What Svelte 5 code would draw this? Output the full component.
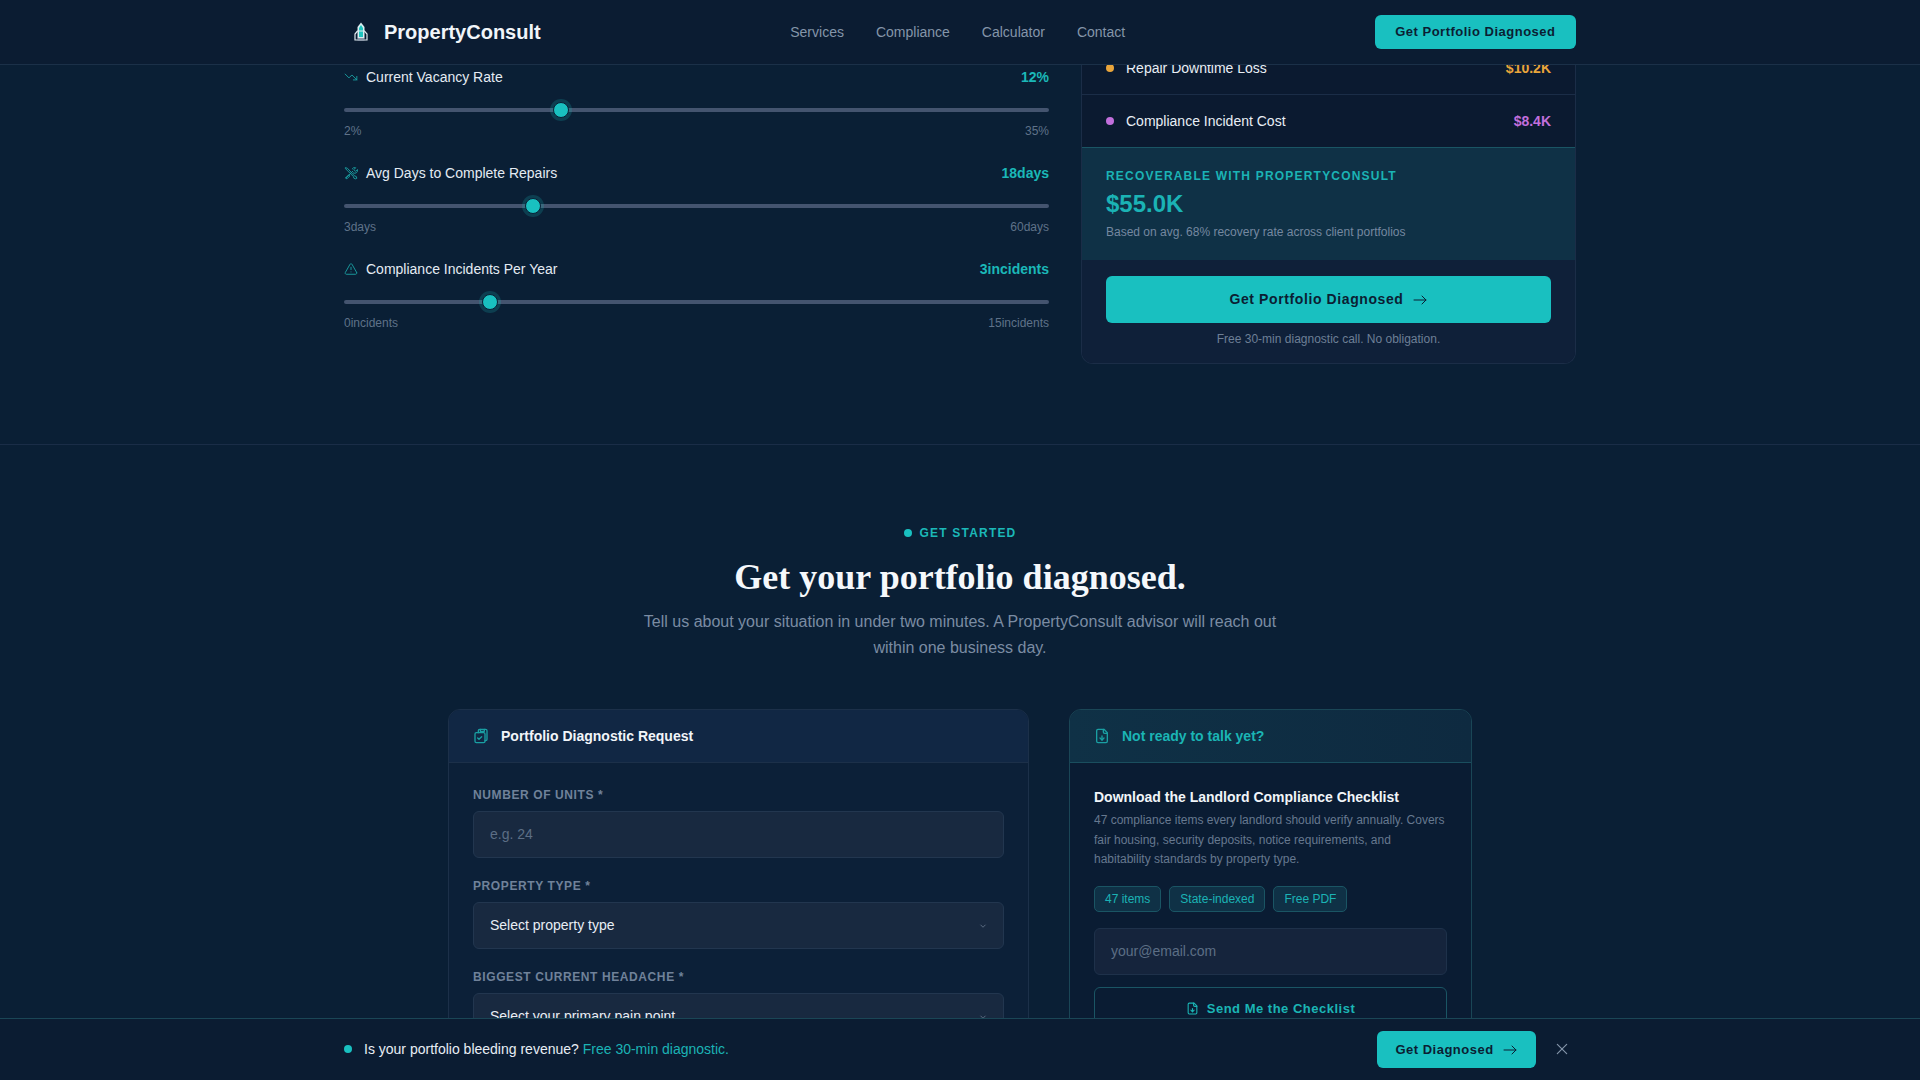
<script>
  const sliders = [
    { label: 'Current Vacancy Rate', icon: 'trend', value: 12, min: 2, max: 35, unit: '%' },
    { label: 'Avg Days to Complete Repairs', icon: 'tools', value: 18, min: 3, max: 60, unit: 'days' },
    { label: 'Compliance Incidents Per Year', icon: 'alert', value: 3, min: 0, max: 15, unit: 'incidents' }
  ];
  const costs = [
    { label: 'Repair Downtime Loss', amount: '$10.2K', color: '#e9a53b' },
    { label: 'Compliance Incident Cost', amount: '$8.4K', color: '#c26fdc' }
  ];
  const tags = ['47 items', 'State-indexed', 'Free PDF'];
</script>

<header class="topbar">
  <div class="topbar-inner">
    <a class="brand" href="#top">
      <svg class="brand-mark" viewBox="0 0 16 20" width="16" height="20" aria-hidden="true">
        <path d="M8 0.5 L11.5 5 V16 H4.5 V5 Z" fill="#dbeef2" />
        <path d="M8 3 L10 6 V15 H6 V6 Z" fill="#1fc4bf" />
        <path d="M4.5 9 L2 12 V18 H5.5 V16 H10.5 V18 H14 V12 L11.5 9 Z" fill="none" stroke="#dfe9ee" stroke-width="1.2" />
        <rect x="4.5" y="16" width="7" height="3" fill="#8a97a8" />
      </svg>
      <span>PropertyConsult</span>
    </a>
    <nav class="nav">
      <a href="#services">Services</a>
      <a href="#compliance">Compliance</a>
      <a href="#calculator">Calculator</a>
      <a href="#contact">Contact</a>
    </nav>
    <button class="btn btn-head">Get Portfolio Diagnosed</button>
  </div>
</header>

<main>
  <section class="calc">
    <div class="calc-grid">
      <div class="sliders">
        {#each sliders as s}
          <div class="slider-row">
            <div class="slider-head">
              <span class="slider-label">
                <svg class="ico" viewBox="0 0 24 24" width="14" height="14" aria-hidden="true">
                  {#if s.icon === 'trend'}
                    <path d="M22 17 13.5 8.5 8.5 13.5 2 7" /><path d="M16 17h6v-6" />
                  {:else if s.icon === 'tools'}
                    <path d="M4 20 15 9" /><path d="M14 5a5 5 0 0 1 6-2l-3 3 1 2 2 1 3-3a5 5 0 0 1-7 6" />
                    <path d="M3 3l3 1 12 13 3 1 1 3-2 1-3-1-1-3L5 7 3 5z" />
                    <path d="M3 21l2 1 5-5-2-2-5 5z" />
                  {:else}
                    <path d="m21.73 18-8-14a2 2 0 0 0-3.46 0l-8 14A2 2 0 0 0 4 21h16a2 2 0 0 0 1.73-3" />
                    <path d="M12 9v4" /><path d="M12 17h.01" />
                  {/if}
                </svg>
                {s.label}
              </span>
              <span class="slider-value">{s.value}{s.unit}</span>
            </div>
            <input class="range" type="range" min={s.min} max={s.max} value={s.value} aria-label={s.label} />
            <div class="slider-limits">
              <span>{s.min}{s.unit}</span>
              <span>{s.max}{s.unit}</span>
            </div>
          </div>
        {/each}
      </div>

      <aside class="cost-card">
        {#each costs as c}
          <div class="cost-row">
            <span class="cost-name">
              <i class="dot" style="background:{c.color}"></i>
              {c.label}
            </span>
            <strong style="color:{c.color}">{c.amount}</strong>
          </div>
        {/each}
        <div class="recover">
          <div class="recover-label">RECOVERABLE WITH PROPERTYCONSULT</div>
          <div class="recover-amount">$55.0K</div>
          <div class="recover-note">Based on avg. 68% recovery rate across client portfolios</div>
        </div>
        <div class="cost-cta">
          <button class="btn btn-wide">
            Get Portfolio Diagnosed
            <svg class="ico arrow" viewBox="0 0 24 24" width="16" height="16" aria-hidden="true"><path d="M3 12h18" /><path d="m15 6 6 6-6 6" /></svg>
          </button>
          <p>Free 30-min diagnostic call. No obligation.</p>
        </div>
      </aside>
    </div>
  </section>

  <section class="started">
    <div class="eyebrow"><i></i>GET STARTED</div>
    <h2>Get your portfolio diagnosed.</h2>
    <p class="lede">Tell us about your situation in under two minutes. A PropertyConsult advisor will reach out within one business day.</p>

    <div class="form-grid">
      <div class="panel">
        <div class="panel-head">
          <svg class="ico" viewBox="0 0 24 24" width="16" height="16" aria-hidden="true">
            <rect x="3" y="7" width="15" height="15" rx="2" />
            <path d="M8 7V4a2 2 0 0 1 2-2h9a2 2 0 0 1 2 2v13a2 2 0 0 1-2 2h-1" />
            <path d="M11 2v3h6V2" /><path d="m7 15 2 2 4-4" />
          </svg>
          <h3>Portfolio Diagnostic Request</h3>
        </div>
        <form class="panel-body">
          <label class="field">
            <span>NUMBER OF UNITS *</span>
            <input type="text" placeholder="e.g. 24" />
          </label>
          <label class="field">
            <span>PROPERTY TYPE *</span>
            <div class="select-wrap">
              <select><option>Select property type</option></select>
              <svg class="chev" viewBox="0 0 24 24" width="10" height="10" aria-hidden="true"><path d="m6 9 6 6 6-6" /></svg>
            </div>
          </label>
          <label class="field">
            <span>BIGGEST CURRENT HEADACHE *</span>
            <div class="select-wrap">
              <select><option>Select your primary pain point</option></select>
              <svg class="chev" viewBox="0 0 24 24" width="10" height="10" aria-hidden="true"><path d="m6 9 6 6 6-6" /></svg>
            </div>
          </label>
        </form>
      </div>

      <div class="panel panel-alt">
        <div class="panel-head">
          <svg class="ico" viewBox="0 0 24 24" width="16" height="16" aria-hidden="true">
            <path d="M15 2H6a2 2 0 0 0-2 2v16a2 2 0 0 0 2 2h12a2 2 0 0 0 2-2V7Z" /><path d="M14 2v4a2 2 0 0 0 2 2h4" /><path d="M12 18v-6" /><path d="m9 15 3 3 3-3" />
          </svg>
          <h3>Not ready to talk yet?</h3>
        </div>
        <div class="panel-body">
          <h4>Download the Landlord Compliance Checklist</h4>
          <p class="desc">47 compliance items every landlord should verify annually. Covers fair housing, security deposits, notice requirements, and habitability standards by property type.</p>
          <div class="tags">
            {#each tags as t}<span>{t}</span>{/each}
          </div>
          <input class="email" type="text" placeholder="your@email.com" />
          <button class="btn-outline" type="button">
            <svg class="ico" viewBox="0 0 24 24" width="13" height="13" aria-hidden="true">
              <path d="M15 2H6a2 2 0 0 0-2 2v16a2 2 0 0 0 2 2h12a2 2 0 0 0 2-2V7Z" /><path d="M14 2v4a2 2 0 0 0 2 2h4" /><path d="M12 18v-6" /><path d="m9 15 3 3 3-3" />
            </svg>
            Send Me the Checklist
          </button>
        </div>
      </div>
    </div>
  </section>
</main>

<div class="stickybar">
  <div class="stickybar-inner">
    <div class="sticky-text"><i></i>Is your portfolio bleeding revenue?&nbsp;<a href="#form">Free 30-min diagnostic.</a></div>
    <div class="sticky-actions">
      <button class="btn btn-sticky">
        Get Diagnosed
        <svg class="ico arrow" viewBox="0 0 24 24" width="16" height="16" aria-hidden="true"><path d="M3 12h18" /><path d="m15 6 6 6-6 6" /></svg>
      </button>
      <button class="close" aria-label="Close">
        <svg class="ico" viewBox="0 0 24 24" width="14" height="14" aria-hidden="true"><path d="M20 4 4 20" /><path d="m4 4 16 16" /></svg>
      </button>
    </div>
  </div>
</div>

<style>
  :global(body) {
    background: #0a1f35;
    color: #e8eef5;
    font-family: "Liberation Sans", Arial, sans-serif;
    overflow: hidden;
  }
  a {
    color: inherit;
    text-decoration: none;
  }
  h2, h3, h4, p {
    margin: 0;
  }
  .ico {
    fill: none;
    stroke: currentColor;
    stroke-width: 2;
    stroke-linecap: round;
    stroke-linejoin: round;
    flex: none;
  }
  .arrow {
    stroke-width: 1.5;
  }

  .topbar {
    position: fixed;
    top: 0;
    left: 0;
    right: 0;
    z-index: 10;
    height: 65px;
    box-sizing: border-box;
    background: #0b1c32;
    border-bottom: 1px solid #1b3048;
  }
  .topbar-inner {
    max-width: 1232px;
    height: 64px;
    margin: 0 auto;
    display: flex;
    align-items: center;
    justify-content: space-between;
  }
  .brand {
    display: flex;
    align-items: center;
    gap: 15px;
    padding-left: 9px;
    font-size: 20px;
    font-weight: 700;
    color: #f1f5f9;
  }
  .nav {
    display: flex;
    gap: 32px;
    font-size: 14px;
    color: #8495a9;
  }
  .btn {
    border: 0;
    border-radius: 6px;
    background: #19c0c0;
    color: #0b1e33;
    font-family: inherit;
    font-weight: 700;
    display: inline-flex;
    align-items: center;
    justify-content: center;
  }
  .btn-head {
    height: 34px;
    padding: 0 20.5px 1px;
    font-size: 13px;
    letter-spacing: 0.5px;
  }

  .calc {
    padding: 42px 0 80px;
    border-bottom: 1px solid #1a2d47;
  }
  .calc-grid {
    max-width: 1232px;
    margin: 0 auto;
    display: grid;
    grid-template-columns: 705px 495px;
    gap: 32px;
    align-items: start;
  }
  .sliders {
    padding-top: 25px;
    display: flex;
    flex-direction: column;
    gap: 24px;
  }
  .slider-head {
    display: flex;
    justify-content: space-between;
    align-items: center;
    height: 20px;
    font-size: 14px;
  }
  .slider-label {
    display: flex;
    align-items: center;
    gap: 8px;
    color: #e4ebf3;
  }
  .slider-label .ico {
    color: #1a9fa3;
    stroke-width: 1.6;
  }
  .slider-value {
    color: #1bb8b8;
    font-weight: 700;
  }
  .range {
    appearance: none;
    -webkit-appearance: none;
    display: block;
    width: 100%;
    height: 14px;
    margin: 16px 0 7px;
    background: transparent;
  }
  .range::-webkit-slider-runnable-track {
    height: 4px;
    border-radius: 2px;
    background: #44546f;
  }
  .range::-webkit-slider-thumb {
    -webkit-appearance: none;
    box-sizing: border-box;
    width: 16px;
    height: 16px;
    margin-top: -6px;
    border-radius: 50%;
    border: 1px solid #0a1f35;
    background: #19c0c0;
    box-shadow: 0 0 0 3px rgba(25, 192, 192, 0.2);
  }
  .slider-limits {
    display: flex;
    justify-content: space-between;
    font-size: 12px;
    line-height: 15px;
    color: #5f7289;
  }

  .cost-card {
    border: 1px solid #1b2d47;
    border-top: 0;
    border-radius: 0 0 12px 12px;
    background: #0b1a30;
    overflow: hidden;
  }
  .cost-row {
    height: 52px;
    padding: 0 24px;
    display: flex;
    align-items: center;
    justify-content: space-between;
    border-bottom: 1px solid #1b2d47;
    font-size: 14px;
  }
  .cost-row:nth-child(2) {
    border-bottom: 0;
    height: 52px;
  }
  .cost-name {
    display: flex;
    align-items: center;
    gap: 12px;
    color: #e8eef5;
  }
  .dot {
    width: 8px;
    height: 8px;
    border-radius: 50%;
  }
  .recover {
    height: 113px;
    box-sizing: border-box;
    padding: 20px 24px 0;
    background: #0f3146;
    border-top: 1px solid #1a5564;
  }
  .recover-label {
    font-size: 12px;
    line-height: 16px;
    font-weight: 700;
    letter-spacing: 1.2px;
    color: #1bb3b5;
  }
  .recover-amount {
    margin-top: 4px;
    font-size: 24px;
    line-height: 32px;
    font-weight: 700;
    color: #1bb3b5;
  }
  .recover-note {
    margin-top: 4px;
    font-size: 12px;
    line-height: 16px;
    color: #7588a0;
  }
  .cost-cta {
    padding: 16px 24px 16px;
    background: #0f2039;
  }
  .btn-wide {
    width: 100%;
    height: 47px;
    padding-bottom: 2px;
    gap: 8px;
    font-size: 14px;
    letter-spacing: 0.6px;
  }
  .btn-wide .arrow {
    margin-top: 2px;
  }
  .cost-cta p {
    margin-top: 8px;
    text-align: center;
    font-size: 12px;
    line-height: 16px;
    color: #6d7f96;
  }

  .started {
    padding-top: 80px;
    text-align: center;
  }
  .eyebrow {
    display: flex;
    justify-content: center;
    align-items: center;
    gap: 8px;
    font-size: 12px;
    line-height: 16px;
    font-weight: 700;
    letter-spacing: 1.2px;
    color: #1bb8b8;
  }
  .eyebrow i {
    width: 8px;
    height: 8px;
    border-radius: 50%;
    background: #19c0c0;
  }
  h2 {
    margin-top: 15px;
    font-family: "Liberation Serif", "Times New Roman", serif;
    font-size: 36px;
    line-height: 43px;
    font-weight: 700;
    color: #f5f8fb;
  }
  .lede {
    max-width: 640px;
    margin: 10px auto 0;
    font-size: 16px;
    line-height: 26px;
    color: #7b8ca3;
  }
  .form-grid {
    width: 1024px;
    margin: 48px auto 0;
    display: grid;
    grid-template-columns: 581px 403px;
    gap: 40px;
    align-items: start;
    text-align: left;
  }
  .panel {
    border: 1px solid #1c3049;
    border-radius: 12px;
    background: #0c2038;
    overflow: hidden;
  }
  .panel-head {
    height: 53px;
    box-sizing: border-box;
    padding: 0 24px;
    display: flex;
    align-items: center;
    gap: 12px;
    background: #112744;
    border-bottom: 1px solid #1c3049;
    color: #1a9fa3;
  }
  .panel-head h3 {
    font-size: 14px;
    font-weight: 700;
    color: #f1f5f9;
  }
  .panel-alt {
    border-color: #1a4656;
    background: #0a1c33;
  }
  .panel-alt .panel-head {
    background: linear-gradient(90deg, #0f3146, #0e2a40);
    border-bottom-color: #1a4e5e;
  }
  .panel-alt .panel-head h3 {
    color: #1bb5b5;
  }
  .panel-body {
    padding: 24px;
  }
  form.panel-body {
    padding-top: 25px;
  }
  .field {
    display: block;
    margin-bottom: 21px;
  }
  .field > span {
    display: block;
    margin-bottom: 8px;
    font-size: 12px;
    line-height: 15px;
    font-weight: 700;
    letter-spacing: 0.6px;
    color: #70829a;
  }
  .field input,
  .field select,
  .email {
    display: block;
    width: 100%;
    height: 47px;
    box-sizing: border-box;
    padding: 0 16px;
    border: 1px solid #22364f;
    border-radius: 6px;
    background: #182940;
    color: #e8eef5;
    font-family: inherit;
    font-size: 14px;
    appearance: none;
    outline: none;
  }
  .field input,
  .field select {
    padding-bottom: 2px;
  }
  input::placeholder {
    color: #5c6e85;
    opacity: 1;
  }
  .select-wrap {
    position: relative;
  }
  .chev {
    position: absolute;
    right: 16px;
    top: 19px;
    fill: none;
    stroke: #67788e;
    stroke-width: 2;
  }
  .panel-body h4 {
    font-size: 14px;
    line-height: 20px;
    font-weight: 700;
    color: #f1f5f9;
  }
  .desc {
    margin-top: 4px;
    font-size: 12px;
    line-height: 19.5px;
    color: #66788f;
  }
  .tags {
    margin-top: 16px;
    display: flex;
    gap: 8px;
  }
  .tags span {
    height: 26px;
    box-sizing: border-box;
    padding: 0 10px;
    display: flex;
    align-items: center;
    border: 1px solid #1a5564;
    border-radius: 5px;
    background: #0f3146;
    color: #1bb3b5;
    font-size: 12px;
  }
  .email {
    margin-top: 16px;
    background: #15243c;
    border-color: #1e314a;
  }
  .btn-outline {
    width: 100%;
    height: 44px;
    margin-top: 12px;
    display: flex;
    align-items: center;
    justify-content: center;
    gap: 8px;
    border: 1px solid #1a5564;
    border-radius: 6px;
    background: transparent;
    color: #1bb5b5;
    font-family: inherit;
    font-size: 13px;
    font-weight: 700;
    letter-spacing: 0.5px;
  }

  .stickybar {
    position: fixed;
    left: 0;
    right: 0;
    bottom: 0;
    z-index: 10;
    height: 62px;
    box-sizing: border-box;
    background: #0b1c32;
    border-top: 1px solid #1a4656;
  }
  .stickybar-inner {
    max-width: 1232px;
    height: 100%;
    margin: 0 auto;
    display: flex;
    align-items: center;
    justify-content: space-between;
  }
  .sticky-text {
    display: flex;
    align-items: center;
    margin-bottom: 1px;
    font-size: 14px;
    color: #e8eef5;
  }
  .sticky-text i {
    width: 8px;
    height: 8px;
    margin-right: 12px;
    border-radius: 50%;
    background: #19c0c0;
  }
  .sticky-text a {
    color: #1bb3b5;
  }
  .sticky-actions {
    display: flex;
    align-items: center;
    gap: 12px;
  }
  .btn-sticky {
    width: 159px;
    height: 37px;
    padding-bottom: 1px;
    gap: 8px;
    font-size: 13px;
    letter-spacing: 0.5px;
  }
  .close {
    width: 28px;
    height: 28px;
    padding: 0 0 1px;
    display: flex;
    align-items: center;
    justify-content: center;
    border: 0;
    background: transparent;
    color: #8495a9;
  }
</style>
